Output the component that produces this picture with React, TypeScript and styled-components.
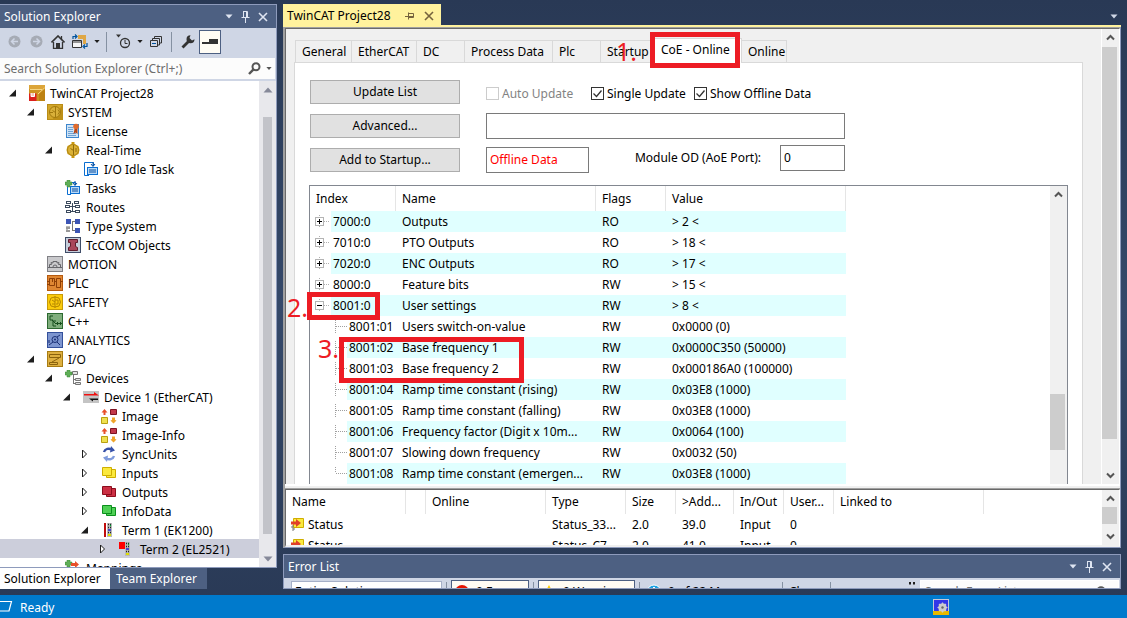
import React from "react";
import styled, { createGlobalStyle, css } from "styled-components";

const GlobalStyle = createGlobalStyle`
  * { box-sizing: border-box; }
  body { margin: 0; overflow: hidden; }
  body, button, input, select, table {
    font-family: "Noto Sans", "Open Sans", sans-serif;
    font-size: 12px;
    line-height: 16px;
    color: #000;
  }
  button { padding: 0; border: 0; background: none; cursor: default; }
  svg { display: block; flex: none; }
`;

/* ---------- shell ---------- */
const Shell = styled.div`
  display: flex;
  flex-direction: column;
  height: 100vh;
  background: linear-gradient(#293955 0%, #35496a 50%, #293955 100%);
`;
const Workspace = styled.main`
  flex: 1;
  min-height: 0;
  display: flex;
  gap: 6px;
  padding: 4px 6px 6px 0;
`;
const StatusBar = styled.footer`
  flex: none;
  height: 23px;
  display: flex;
  align-items: center;
  gap: 7px;
  padding-right: 178px;
  background: #007acc;
  color: #fff;
`;
const StatusText = styled.span`
  flex: 1;
  padding-top: 2px;
`;

/* ---------- tool windows ---------- */
const Sidebar = styled.aside`
  flex: 0 0 277px;
  min-height: 0;
  display: flex;
  flex-direction: column;
`;
const ToolWindow = styled.section`
  flex: 1;
  min-height: 0;
  display: flex;
  flex-direction: column;
  overflow: hidden;
  border: 1px solid #8e9bbc;
  border-left: 0;
  background: #fff;
`;
const TitleBar = styled.header`
  flex: none;
  height: 23px;
  display: flex;
  align-items: center;
  gap: 8px;
  padding: 0 8px 0 4px;
  background: #4d6082;
  color: #fff;
`;
const Title = styled.h2`
  flex: 1;
  margin: 0;
  font-size: 12px;
  font-weight: 400;
`;
const Toolbar = styled.div`
  flex: none;
  height: 29px;
  display: flex;
  align-items: center;
  padding: 0 0 2px 3px;
  background: #cfd6e5;
`;
const ToolButton = styled.button<{ $narrow?: boolean; $on?: boolean }>`
  width: ${(p) => (p.$narrow ? 11 : 22)}px;
  height: 24px;
  display: flex;
  align-items: center;
  justify-content: center;
  ${(p) => p.$on && css`
    border: 1px solid #4d6082;
    background: #fffcf4;
  `}
`;
const Divider = styled.span`
  width: 1px;
  height: 20px;
  margin: 0 5px 0 4px;
  background: #8591a2;
`;
const SearchRow = styled.label`
  flex: none;
  height: 24px;
  display: flex;
  align-items: center;
  gap: 5px;
  padding-right: 3px;
  border: solid #cfd6e5;
  border-width: 1px 1px 2px 0;
  background: #fcfcfc;
`;
const SearchInput = styled.input`
  flex: 1;
  min-width: 0;
  padding: 0 0 0 4px;
  border: 0;
  outline: 0;
  background: transparent;
  &::placeholder { color: #6d6d6d; opacity: 1; }
`;
const TreeArea = styled.div`
  flex: 1;
  min-height: 0;
  display: flex;
  overflow: hidden;
`;
const TreeList = styled.ul`
  flex: 1;
  margin: 0;
  padding: 2px 0 0;
  list-style: none;
`;
const TreeRow = styled.li<{ $level: number; $selected?: boolean }>`
  height: 19px;
  display: flex;
  align-items: center;
  padding-left: ${(p) => 8 + p.$level * 18}px;
  background: ${(p) => (p.$selected ? "#cccedb" : "transparent")};
  white-space: nowrap;
`;
const ArrowSlot = styled.span`
  width: 21px;
  flex: none;
`;
const TreeLabel = styled.span`
  padding: 2px 0 0 5px;
`;
const PaneTabs = styled.div`
  flex: none;
  height: 21px;
  display: flex;
`;
const PaneTab = styled.button<{ $active?: boolean }>`
  width: ${(p) => (p.$active ? 110 : 97)}px;
  padding: 0 0 0 ${(p) => (p.$active ? 4 : 6)}px;
  text-align: left;
  background: ${(p) => (p.$active ? "#fff" : "#4d6082")};
  color: ${(p) => (p.$active ? "#000" : "#fff")};
`;

/* ---------- scrollbars ---------- */
const Track = styled.div<{ $width: number; $bg: string }>`
  flex: none;
  width: ${(p) => p.$width}px;
  display: flex;
  flex-direction: column;
  align-items: center;
  background: ${(p) => p.$bg};
`;
const TrackButton = styled.button`
  height: 17px;
  flex: none;
  display: flex;
  align-items: center;
`;
const Thumb = styled.div<{ $size: number; $width: number; $fill: string; $flush?: boolean }>`
  flex: ${(p) => p.$size} 0 0;
  align-self: ${(p) => (p.$flush ? "flex-start" : "center")};
  width: ${(p) => p.$width}px;
  background: ${(p) => p.$fill};
`;
const Gap = styled.div<{ $size: number }>`
  flex: ${(p) => p.$size} 0 0;
`;

/* ---------- document area ---------- */
const DocumentArea = styled.div`
  flex: 1;
  min-width: 0;
  display: flex;
  flex-direction: column;
`;
const DocumentTabs = styled.div`
  flex: none;
  height: 23px;
  display: flex;
  align-items: flex-start;
  justify-content: space-between;
  border-bottom: 2px solid #fff29d;
`;
const DocumentTab = styled.div`
  height: 21px;
  display: flex;
  align-items: center;
  gap: 9px;
  padding: 2px 7px 0 4px;
  background: #fff29d;
`;
const DocumentName = styled.span`
  width: 109px;
`;
const TabListButton = styled.button`
  height: 24px;
  padding-right: 3px;
`;
const EditorFrame = styled.section`
  flex: 1;
  min-height: 0;
  display: flex;
  flex-direction: column;
  padding-top: 1px;
  border: solid #8e9bbc;
  border-width: 0 1px 1px 0;
  border-left: 2px solid #a0a0a0;
  background: #f0f0f0;
`;
const SunkenPane = styled.div<{ $grow?: boolean }>`
  ${(p) => (p.$grow ? "flex: 1; min-height: 0;" : "flex: none; height: 58px;")}
  display: flex;
  overflow: hidden;
  border-top: 1px solid #696969;
  border-left: 1px solid #696969;
  border-right: 1px solid #fff;
  box-shadow: 0 -1px #a0a0a0;
  ${(p) => !p.$grow && "background: #fff; border-bottom: 2px solid #f0f0f0;"}
`;
const Splitter = styled.div`
  flex: none;
  height: 5px;
  border-top: 2px solid #fff;
  background: #f0f0f0;
`;
const FormPane = styled.div`
  position: relative;
  flex: 1;
  min-width: 0;
  padding: 9px 18px 0 8px;
  border-right: 1px solid #fff;
  overflow: hidden;
`;
const TabStrip = styled.div`
  height: 24px;
  display: flex;
  align-items: flex-end;
  padding-left: 1px;
`;
const Tab = styled.button<{ $width: number; $active?: boolean }>`
  flex: none;
  width: ${(p) => p.$width}px;
  height: ${(p) => (p.$active ? 25 : 22)}px;
  padding: 0 0 ${(p) => (p.$active ? 3 : 0)}px 6px;
  margin-bottom: ${(p) => (p.$active ? -1 : 0)}px;
  border: solid #d9d9d9;
  border-width: 1px 1px 0 0;
  background: ${(p) => (p.$active ? "#fff" : "#f0f0f0")};
  text-align: left;
  white-space: nowrap;
  &:first-child { border-left-width: 1px; }
`;
const TabPage = styled.div`
  padding: 17px 14px 0 14px;
  border: 1px solid #d9d9d9;
  background: #fff;
`;
const FormGrid = styled.div`
  display: grid;
  grid-template-columns: 150px 359px;
  grid-auto-rows: 24px;
  gap: 10px 26px;
  align-items: center;
  padding-left: 1px;
`;
const PushButton = styled.button`
  height: 24px;
  border: 1px solid #adadad;
  background: #e1e1e1;
`;
const CheckGroup = styled.div`
  display: flex;
  align-items: center;
  gap: 5px;
  padding-top: 3px;
`;
const CheckLabel = styled.label<{ $width: number; $muted?: boolean }>`
  flex: none;
  width: ${(p) => p.$width}px;
  display: flex;
  align-items: center;
  gap: 3px;
  white-space: nowrap;
  color: ${(p) => (p.$muted ? "#838383" : "#000")};
`;
const CheckBox = styled.input`
  appearance: none;
  flex: none;
  width: 13px;
  height: 13px;
  margin: 0;
  border: 1px solid #333;
  background: #fff;
  &:disabled { border-color: #ccc; }
  &:checked {
    background: #fff url("data:image/svg+xml,%3Csvg xmlns='http://www.w3.org/2000/svg' width='11' height='11'%3E%3Cpath d='M1.5 5.5l3 3 5-6' fill='none' stroke='%23333' stroke-width='1.3'/%3E%3C/svg%3E") no-repeat;
  }
`;
const TextBox = styled.input<{ $width?: number; $red?: boolean }>`
  width: ${(p) => (p.$width ? p.$width + "px" : "100%")};
  height: 26px;
  padding: 0 3px 2px;
  border: 1px solid #7a7a7a;
  border-radius: 0;
  outline: 0;
  background: #fff;
  color: ${(p) => (p.$red ? "#f00" : "#000")};
`;
const SplitField = styled.div`
  display: flex;
  align-items: center;
  justify-content: space-between;
`;
const PortField = styled.label`
  display: flex;
  align-items: center;
  gap: 19px;
  padding-bottom: 4px;
`;
const ListBox = styled.div`
  height: 400px;
  margin-top: 13px;
  display: flex;
  justify-content: space-between;
  overflow: hidden;
  border: 1px solid #828790;
`;

/* ---------- tables ---------- */
const Table = styled.table<{ $width: number }>`
  width: ${(p) => p.$width}px;
  table-layout: fixed;
  border-collapse: collapse;
  align-self: flex-start;
`;
const HeadCell = styled.th<{ $width: number; $tall?: boolean }>`
  width: ${(p) => p.$width}px;
  height: ${(p) => (p.$tall ? 25 : 24)}px;
  padding: 0 0 0 6px;
  font-weight: 400;
  text-align: left;
  white-space: nowrap;
  box-shadow: inset -1px 0 #e5e5e5;
`;
const Row = styled.tr<{ $tint?: boolean }>`
  height: 21px;
  background: ${(p) => (p.$tint ? "#e0ffff" : "#fff")};
`;
const Cell = styled.td<{ $inset?: number }>`
  height: 21px;
  padding: 0 0 0 ${(p) => p.$inset ?? 6}px;
  overflow: hidden;
  white-space: nowrap;
`;
const IndexCell = styled.div`
  height: 21px;
  display: flex;
  align-items: center;
  gap: 2px;
`;
const Branch = styled.span`
  display: block;
  background: #fff;
`;
const IconText = styled.div`
  display: flex;
  align-items: center;
  gap: 4px;
`;

/* ---------- annotations ---------- */
const MarkBox = styled.div<{ $x: number; $y: number; $w: number; $h: number }>`
  position: absolute;
  left: ${(p) => p.$x}px;
  top: ${(p) => p.$y}px;
  width: ${(p) => p.$w}px;
  height: ${(p) => p.$h}px;
  border: 5px solid #ed1c24;
  pointer-events: none;
`;
const MarkNumber = styled.span<{ $x: number; $y: number }>`
  position: absolute;
  left: ${(p) => p.$x}px;
  top: ${(p) => p.$y}px;
  font-size: 25px;
  line-height: 26px;
  color: #ed1c24;
  pointer-events: none;
`;

/* ---------- error list ---------- */
const ErrorWindow = styled.section`
  flex: none;
  height: 35px;
  margin-top: 6px;
  overflow: hidden;
  border: 1px solid #8e9bbc;
  background: #cfd6e5;
`;
const ErrorToolbar = styled.div`
  display: flex;
  align-items: flex-start;
  gap: 4px;
  padding: 2px 1px 0 7px;
`;
const Scope = styled.select`
  appearance: none;
  width: 151px;
  height: 22px;
  margin-top: 1px;
  padding: 0 3px;
  border: 1px solid #a6b0c8;
  border-radius: 0;
  background: #fff;
`;
const ErrorFilter = styled.button<{ $width: number; $on?: boolean }>`
  width: ${(p) => p.$width}px;
  height: 24px;
  display: flex;
  align-items: center;
  gap: 6px;
  padding-left: 2px;
  white-space: nowrap;
  ${(p) => p.$on && css`
    border: 1px solid #4d6082;
    background: #fffcf4;
  `}
`;
const ErrorDivider = styled.span`
  width: 1px;
  height: 20px;
  margin-top: 2px;
  background: #8591a2;
`;
const Overflow = styled.span`
  flex: 1;
  display: flex;
  justify-content: flex-end;
  padding-top: 2px;
`;
const ErrorSearch = styled(SearchRow)`
  width: 199px;
  padding-right: 12px;
  border: 1px solid #fff;
`;

/* ---------- small glyphs ---------- */
const Caret = ({ fill = "#1e1e1e", w = 8 }: { fill?: string; w?: number }) => (
  <svg width={w} height="5" viewBox="0 0 8 5"><path d="M0.5 0.5h7L4 4.5z" fill={fill} /></svg>
);
const Pin = () => (
  <svg width="9" height="12" viewBox="0 0 9 12" fill="none" stroke="#dfe5f2"><path d="M2.500 0v6.500M2 0.500h4.500v6M5.500 0.500v6M0.500 6.500h8M4.500 7v5" /></svg>
);
const SidePin = () => (
  <svg width="10" height="8" viewBox="0 0 10 8" fill="none" stroke="#75633d"><path d="M0 4.500h3M3.500 0.500v7M3.500 1.500h5v4h-5M3.500 4.500h5" /></svg>
);
const Cross = ({ color = "#dfe5f2" }: { color?: string }) => (
  <svg width="10" height="10" viewBox="0 0 10 10" fill="none" stroke={color} strokeWidth="1.6"><path d="M1 1l8 8M9 1L1 9" /></svg>
);
const Magnifier = ({ color = "#555" }: { color?: string }) => (
  <svg width="13" height="13" viewBox="0 0 13 13" fill="none" stroke={color} strokeWidth="2"><circle cx="8" cy="4.700" r="3.500" /><path d="M5.500 7.300L1 12" strokeWidth="2.400" /></svg>
);
const Chevron = ({ up }: { up?: boolean }) => (
  <svg width="9" height="7" viewBox="0 0 9 7" fill="none" stroke="#555" strokeWidth="2"><path d={up ? "M1 5.500L4.500 2 8 5.500" : "M1 1.500L4.500 5 8 1.500"} /></svg>
);
const Wedge = ({ up }: { up?: boolean }) => (
  <svg width="10" height="6" viewBox="0 0 10 6"><path d={up ? "M0.500 5.500h9L5 0.500z" : "M0.500 0.500h9L5 5.500z"} fill="#868999" /></svg>
);
const TreeArrow = ({ open }: { open: boolean }) => (
  <svg width="9" height="10" viewBox="0 0 9 10">
    {open ? <path d="M8 1.500V8.500H1z" fill="#1e1e1e" /> : <path d="M2.500 1v8L6.500 5z" fill="#fff" stroke="#1e1e1e" />}
  </svg>
);

type Kind = "project" | "system" | "license" | "clock" | "task" | "tasks" | "routes" | "types" | "tccom" | "motion" | "plc" | "safety" | "cpp" | "analytics" | "io" | "devices" | "ethercat" | "image" | "sync" | "inputs" | "outputs" | "info" | "term1" | "term2" | "mappings";

const Stack = ({ fill, edge }: { fill: string; edge: string }) => (
  <g fill={fill} stroke={edge}><path d="M5.500 4.500h9v8h-9z" /><path d="M1.500 2.500h9v8h-9z" /></g>
);
const Plus = () => <path d="M2 0h3v2h2v3H5v2H2V5H0V2h2z" fill="#5fae57" stroke="#3f8a3b" strokeWidth="0.5" />;
const Leds = ({ x }: { x: number }) => (
  <g>
    <rect x={x} y="1" width="5" height="14" fill="#b9b9b9" />
    <path d={`M${x + 1} 2.500h1M${x + 3} 2.500h1M${x + 1} 5.500h1M${x + 3} 5.500h1M${x + 1} 10.500h1M${x + 3} 10.500h1`} stroke="#222" strokeWidth="1.500" />
    <path d={`M${x + 3} 3.500h1`} stroke="#0a3" strokeWidth="1.500" />
    <path d={`M${x + 1} 8h3`} stroke="#22c" strokeWidth="1.500" />
    <path d={`M${x + 1} 13h3`} stroke="#dd0" strokeWidth="2" />
  </g>
);

const drawings: Record<Kind, React.ReactNode> = {
  project: (<><rect width="16" height="16" fill="#cd9320" /><path d="M0 0h16v4H0z" fill="#dca53a" /><path d="M1 4.500h12M15.500 3L9 9" stroke="#f6d684" fill="none" /><path d="M10 9l6-5v12h-6z" fill="#bd8212" /><path d="M0 8.500h7.500V16H0z" fill="#dc1f1c" /><path d="M2 8v3.500h3.500V8" stroke="#fff" fill="#f4c9b8" /></>),
  system: (<><rect x="0.500" y="0.500" width="15" height="15" fill="#d2a62a" stroke="#b98c16" /><path d="M16 0v16H5z" fill="#bd8f17" /><circle cx="8" cy="8" r="5.500" fill="#d9b03a" stroke="#a37a0d" /><path d="M8.500 3v10M5.500 6.500l3 2M3 8.500h3M11 5.500l1.500 2.500-1.500 2.500" stroke="#a0780d" fill="none" /></>),
  license: (<><rect x="1.500" y="1.500" width="12" height="13" fill="#cfe3f6" stroke="#3d86cc" /><path d="M3 4.500h5M3 6.500h5M3 8.500h5M3 10.500h8M3 12.500h8" stroke="#6fa3d4" /><circle cx="11" cy="3.500" r="2.800" fill="#e06a2b" /><path d="M9.500 6l-1 5 2-1.500 2 1.500V6z" fill="#b8481a" /></>),
  clock: (<><path d="M6.500 0h3v2l4 2 1 4-1 4-4 2v2h-3v-2l-4-2-1-4 1-4 4-2z" fill="#c8970f" /><circle cx="8" cy="8" r="5.500" fill="#dbb136" stroke="#b38711" /><path d="M8.500 3v10M5.500 6.500l3 2M11 6v4" stroke="#8f6b0a" fill="none" /></>),
  task: (<><path d="M6 14.500H1.500v-13h9V5" fill="#fff" stroke="#0a6ed1" /><path d="M10 1v4M8 3l2 2.500L12 3" stroke="#0a4f9e" fill="none" /><rect x="4.500" y="6.500" width="10" height="7" fill="#b8d9f8" stroke="#0a6ed1" /><path d="M6 9h7M6 11h7" stroke="#0a4f9e" /></>),
  tasks: (<><path d="M6 14.500H2.500v-12h8V5" fill="#fff" stroke="#0a6ed1" /><path d="M10 1v4M8 3l2 2.500L12 3" stroke="#0a4f9e" fill="none" /><rect x="5.500" y="6.500" width="9" height="7" fill="#b8d9f8" stroke="#0a6ed1" /><path d="M7 9h6M7 11h6" stroke="#0a4f9e" /><Plus /></>),
  routes: (<g fill="#fff" stroke="#3b4a5e"><path d="M7.500 4v9M2 7.500h11M3 12.500h9" fill="none" /><rect x="1.500" y="2.500" width="4" height="2" /><rect x="9.500" y="2.500" width="4" height="2" /><rect x="0.500" y="6.500" width="4" height="2" /><rect x="10.500" y="6.500" width="4" height="2" /><rect x="1.500" y="11.500" width="4" height="2" /><rect x="10.500" y="11.500" width="4" height="2" /></g>),
  types: (<><path d="M1 1h5v5H1zM10 1h5v5h-5zM10 10h5v5h-5z" fill="#3c55b5" /><path d="M7.500 3v10M7 3.500h3M7 12.500h3M2 8v6M4 8v3M1 10h4" stroke="#777" fill="none" /><path d="M1 12h4v2H1z" fill="#999" /></>),
  tccom: (<><rect x="0.500" y="0.500" width="15" height="15" fill="#c5ccd9" stroke="#3f4d68" /><path d="M3.500 2.500h9v3h-2v4l2 1v3h-9v-3l2-1v-4h-2z" fill="#a8455a" stroke="#5f1c2c" /></>),
  motion: (<><rect x="0.500" y="0.500" width="15" height="15" fill="#c9c9cc" stroke="#808085" /><path d="M1 11.500h14M2.500 11V8.500h2L4 6.500l2 .5V5.500h4V7l2-.5-.5 2h2V11M6 11a2 2 0 014 0" stroke="#66666b" fill="none" /></>),
  plc: (<><rect x="0.500" y="0.500" width="15" height="15" fill="#e08733" stroke="#b55a10" /><path d="M2.500 3.500h5v7h-5zM9.500 3.500h4v9h-4zM0 6.500h2M0 9.500h2M7 6.500h2M14 6.500h2M5.500 3v4" stroke="#8f3f06" fill="none" /></>),
  safety: (<><rect x="0.500" y="0.500" width="15" height="15" fill="#fbcb0c" stroke="#c79a06" /><path d="M8 2v12M8 3L4 4 2.500 8 4 12l4 1M8 3l4 1 1.500 4L12 12l-4 1M5 6l3 2M5 10h3M8 6h3v4H9" stroke="#b58700" fill="none" /></>),
  cpp: (<><rect x="0.500" y="0.500" width="15" height="15" fill="#7fae7c" stroke="#2c6930" /><path d="M6 3H3v4h3M9 8H6v5h3M5 7l4 4M9 10.500h3M10.500 9v3M12 10.500h3M13.500 9v3" stroke="#174e1c" fill="none" /></>),
  analytics: (<><rect x="0.500" y="0.500" width="15" height="15" fill="#7d95cf" stroke="#34509b" /><circle cx="8" cy="7.500" r="3" fill="none" stroke="#1a2f74" /><circle cx="8" cy="7.500" r="1" fill="#1a2f74" /><path d="M2 13l4-3M10 10l3 3M10 5l3-2M2 11V8" stroke="#1a2f74" fill="none" /></>),
  io: (<><rect x="0.500" y="0.500" width="15" height="15" fill="#deb040" stroke="#a87c12" /><path d="M2.500 3.500h11v3h-11zM12 7l-7 4M2.500 11.500h8v2h-8z" stroke="#8a620c" fill="none" /></>),
  devices: (<><path d="M8.500 5v9M8 9.500h3M8 13.500h3" stroke="#777" fill="none" /><path d="M7.500 1.500h5v3h-5zM10.500 8.500h5v2h-5zM10.500 12.500h5v2h-5z" fill="#e4e4e4" stroke="#777" /><Plus /></>),
  ethercat: (<><rect y="2" width="16" height="12" fill="#c4c4c4" /><path d="M1 5h10V3l5 3.500H1z" fill="#f01010" /><path d="M15 9.500H6l4 3V11h5z" fill="#111" /></>),
  image: (<><path d="M3.500 1l3 3.500h-2V7h-2V4.500h-2z" fill="#e8502a" /><path d="M9.500 1.500h6v5h-6z" fill="#c2384a" stroke="#7d1322" /><path d="M0.500 9.500h6v6h-6z" fill="#efe04f" stroke="#b9a011" /><path d="M12.500 15.500l-3-3 1.500-.5V9.500h3V12l1.500.5z" fill="#efa52a" /></>),
  sync: (<g fill="none" strokeWidth="2.400"><path d="M3 6c1-3.500 5-4 8-2.500" stroke="#3650a8" /><path d="M10 0l4 4.500-5 2z" fill="#3650a8" stroke="none" /><path d="M13 10c-1 3.500-5 4-8 2.500" stroke="#7f9bdc" /><path d="M6 16l-4-4.500 5-2z" fill="#7f9bdc" stroke="none" /></g>),
  inputs: <Stack fill="#fbe93d" edge="#cfae00" />,
  outputs: <Stack fill="#cc2f44" edge="#8c0d1c" />,
  info: <Stack fill="#4fd055" edge="#0b8f1d" />,
  term1: (<><rect x="3" y="1" width="2" height="14" fill="#c00d0d" /><Leds x={6} /></>),
  term2: (<><rect x="0" y="1" width="6" height="7" fill="#f00" /><Leds x={6} /></>),
  mappings: (<><Plus /><path d="M6 3h4V1l4 3.500L10 8V6H6z" fill="#e8502a" /></>),
};
const KindIcon = ({ kind }: { kind: Kind }) => (
  <svg width="16" height="16" viewBox="0 0 16 16" aria-hidden="true">{drawings[kind]}</svg>
);

/* ---------- data ---------- */
type Node = [level: number, kind: Kind, label: string, open?: boolean];
const nodes: Node[] = [
  [0, "project", "TwinCAT Project28", true],
  [1, "system", "SYSTEM", true],
  [2, "license", "License"],
  [2, "clock", "Real-Time", true],
  [3, "task", "I/O Idle Task"],
  [2, "tasks", "Tasks"],
  [2, "routes", "Routes"],
  [2, "types", "Type System"],
  [2, "tccom", "TcCOM Objects"],
  [1, "motion", "MOTION"],
  [1, "plc", "PLC"],
  [1, "safety", "SAFETY"],
  [1, "cpp", "C++"],
  [1, "analytics", "ANALYTICS"],
  [1, "io", "I/O", true],
  [2, "devices", "Devices", true],
  [3, "ethercat", "Device 1 (EtherCAT)", true],
  [4, "image", "Image"],
  [4, "image", "Image-Info"],
  [4, "sync", "SyncUnits", false],
  [4, "inputs", "Inputs", false],
  [4, "outputs", "Outputs", false],
  [4, "info", "InfoData", false],
  [4, "term1", "Term 1 (EK1200)", true],
  [5, "term2", "Term 2 (EL2521)", false],
  [2, "mappings", "Mappings"],
];

const objects: [index: string, name: string, flags: string, value: string][] = [
  ["7000:0", "Outputs", "RO", "> 2 <"],
  ["7010:0", "PTO Outputs", "RO", "> 18 <"],
  ["7020:0", "ENC Outputs", "RO", "> 17 <"],
  ["8000:0", "Feature bits", "RW", "> 15 <"],
  ["8001:0", "User settings", "RW", "> 8 <"],
  ["8001:01", "Users switch-on-value", "RW", "0x0000 (0)"],
  ["8001:02", "Base frequency 1", "RW", "0x0000C350 (50000)"],
  ["8001:03", "Base frequency 2", "RW", "0x000186A0 (100000)"],
  ["8001:04", "Ramp time constant (rising)", "RW", "0x03E8 (1000)"],
  ["8001:05", "Ramp time constant (falling)", "RW", "0x03E8 (1000)"],
  ["8001:06", "Frequency factor (Digit x 10m...", "RW", "0x0064 (100)"],
  ["8001:07", "Slowing down frequency", "RW", "0x0032 (50)"],
  ["8001:08", "Ramp time constant (emergen...", "RW", "0x03E8 (1000)"],
];

const tabs: [label: string, width: number][] = [
  ["General", 57], ["EtherCAT", 65], ["DC", 48], ["Process Data", 88], ["Plc", 48], ["Startup", 54], ["CoE - Online", 87], ["Online", 45],
];

const linkColumns: [label: string, width: number][] = [
  ["Name", 120], ["", 20], ["Online", 120], ["Type", 80], ["Size", 50], [">Add...", 58], ["In/Out", 50], ["User...", 50], ["Linked to", 150],
];
const links = [
  ["Status", "", "", "Status_33...", "2.0", "39.0", "Input", "0", ""],
  ["Status", "", "", "Status_C7...", "2.0", "41.0", "Input", "0", ""],
];

/* ---------- parts ---------- */
type BarProps = { before: number; size: number; after: number };
const ClassicScroll = ({ before, size, after }: BarProps) => (
  <Track $width={17} $bg="#f0f0f0">
    <TrackButton aria-label="Scroll up"><Chevron up /></TrackButton>
    <Gap $size={before} />
    <Thumb $size={size} $width={15} $fill="#cdcdcd" $flush />
    <Gap $size={after} />
    <TrackButton aria-label="Scroll down"><Chevron /></TrackButton>
  </Track>
);

const IndexBranch = ({ index }: { index: string }) => {
  const parent = index.endsWith(":0");
  const open = index === "8001:0";
  const last = index === "8001:08";
  return (
    <Branch>
      {parent ? (
        <svg width="21" height="21" viewBox="0 0 21 21" fill="none">
          <path d="M9.500 4v2M9.500 15v2M14 10.500h6" stroke="#b0b0b0" strokeDasharray="1 1" />
          <rect x="5.500" y="6.500" width="8" height="8" fill="#fff" stroke="#b4b4b4" />
          <path d={open ? "M7 10.500h5" : "M7 10.500h5M9.500 8v5"} stroke="#000" />
        </svg>
      ) : (
        <svg width="37" height="21" viewBox="0 0 37 21" fill="none">
          <path d={last ? "M25.500 4v6M26 10.500h11" : "M25.500 4v13M26 10.500h11"} stroke="#a0a0a0" strokeDasharray="1 1" />
        </svg>
      )}
    </Branch>
  );
};

const SolutionExplorer = () => (
  <Sidebar>
    <ToolWindow>
      <TitleBar>
        <Title>Solution Explorer</Title>
        <button aria-label="Window position"><Caret fill="#dfe5f2" /></button>
        <button aria-label="Auto hide"><Pin /></button>
        <button aria-label="Close"><Cross /></button>
      </TitleBar>
      <Toolbar>
        <ToolButton aria-label="Back"><svg width="13" height="13" viewBox="0 0 13 13"><circle cx="6.500" cy="6.500" r="6" fill="#a6abb5" /><path d="M10 6.500H4M6.500 3.500l-3 3 3 3" stroke="#cfd6e5" strokeWidth="1.500" fill="none" /></svg></ToolButton>
        <ToolButton aria-label="Forward"><svg width="13" height="13" viewBox="0 0 13 13"><circle cx="6.500" cy="6.500" r="6" fill="#a6abb5" /><path d="M3 6.500h6M6.500 3.500l3 3-3 3" stroke="#cfd6e5" strokeWidth="1.500" fill="none" /></svg></ToolButton>
        <ToolButton aria-label="Home"><svg width="14" height="14" viewBox="0 0 14 14" fill="none" stroke="#333"><path d="M0.500 7.500L7 1l6.500 6.500" strokeWidth="1.600" /><path d="M2.500 7v6.500h9V7M10.500 1v3" strokeWidth="1.300" /><path d="M5 8h4v5.500H5z" fill="#333" stroke="none" /></svg></ToolButton>
        <ToolButton aria-label="Sync with active document"><svg width="16" height="15" viewBox="0 0 16 15" fill="none"><path d="M6 1h8v9h-3V5H6z" fill="#dfa745" /><path d="M0.500 6.500h9v7h-9z" fill="#f5f5f5" stroke="#333" /><path d="M0.500 8h9" stroke="#333" /><path d="M1 5V2.500h3M3 0.500l2 2-2 2M15 9v3.500h-3M13 10.500l-2 2 2 2" stroke="#00539c" strokeWidth="1.200" /></svg></ToolButton>
        <ToolButton $narrow aria-label="More scopes"><Caret w={6} /></ToolButton>
        <Divider />
        <ToolButton aria-label="Pending changes filter"><svg width="15" height="15" viewBox="0 0 15 15" fill="none" stroke="#333"><circle cx="9" cy="9" r="4.500" strokeWidth="1.300" /><path d="M9 6v3.500h2.500" /><path d="M0 0.500h5L2.500 3.500z" fill="#333" stroke="none" /></svg></ToolButton>
        <ToolButton $narrow aria-label="More filters"><Caret w={6} /></ToolButton>
        <ToolButton aria-label="Collapse all"><svg width="12" height="12" viewBox="0 0 12 12" fill="none" stroke="#333"><path d="M0.500 4.500h7v6h-7zM2.500 4V2.500h7V9H8M4.500 2V0.500h7V7H10" /><path d="M2 7.500h4" stroke="#00539c" /></svg></ToolButton>
        <Divider />
        <ToolButton aria-label="Properties"><svg width="15" height="15" viewBox="0 0 15 15" fill="none" stroke="#333"><path d="M1.500 13.500L8 7" strokeWidth="2.800" /><path d="M9.500 1.300a4 4 0 104 4L11 6.500 8.500 4z" fill="#333" stroke="none" /></svg></ToolButton>
        <ToolButton $on aria-label="Preview selected items"><svg width="16" height="6" viewBox="0 0 16 6" fill="#333"><path d="M0 3h7v2H0zM7 0h9v5H7z" /></svg></ToolButton>
      </Toolbar>
      <SearchRow>
        <SearchInput aria-label="Search Solution Explorer" placeholder="Search Solution Explorer (Ctrl+;)" />
        <Magnifier /><Caret fill="#555" w={6} />
      </SearchRow>
      <TreeArea>
        <TreeList>
          {nodes.map(([level, kind, label, open]) => (
            <TreeRow key={label} $level={level} $selected={kind === "term2"}>
              <ArrowSlot>{open !== undefined && <TreeArrow open={open} />}</ArrowSlot>
              <KindIcon kind={kind} />
              <TreeLabel>{label}</TreeLabel>
            </TreeRow>
          ))}
        </TreeList>
        <Track $width={17} $bg="#e8e8ec">
          <TrackButton aria-label="Scroll up"><Wedge up /></TrackButton>
          <Gap $size={19} />
          <Thumb $size={417} $width={9} $fill="#c2c3c9" />
          <Gap $size={16} />
          <TrackButton aria-label="Scroll down"><Wedge /></TrackButton>
        </Track>
      </TreeArea>
    </ToolWindow>
    <PaneTabs>
      <PaneTab $active>Solution Explorer</PaneTab>
      <PaneTab>Team Explorer</PaneTab>
    </PaneTabs>
  </Sidebar>
);

const CoeOnline = () => (
  <FormPane>
    <TabStrip role="tablist">
      {tabs.map(([label, width]) => (
        <Tab key={label} role="tab" aria-selected={label === "CoE - Online"} $width={width} $active={label === "CoE - Online"}>{label}</Tab>
      ))}
    </TabStrip>
    <TabPage>
      <FormGrid>
        <PushButton>Update List</PushButton>
        <CheckGroup>
          <CheckLabel $width={100} $muted><CheckBox type="checkbox" disabled />Auto Update</CheckLabel>
          <CheckLabel $width={98}><CheckBox type="checkbox" defaultChecked />Single Update</CheckLabel>
          <CheckLabel $width={120}><CheckBox type="checkbox" defaultChecked />Show Offline Data</CheckLabel>
        </CheckGroup>
        <PushButton>Advanced...</PushButton>
        <TextBox aria-label="Advanced settings" />
        <PushButton>Add to Startup...</PushButton>
        <SplitField>
          <TextBox aria-label="Data source" $width={103} $red defaultValue="Offline Data" />
          <PortField>Module OD (AoE Port):<TextBox $width={65} defaultValue="0" /></PortField>
        </SplitField>
      </FormGrid>
      <ListBox>
        <Table $width={536}>
          <thead>
            <tr>
              <HeadCell $tall $width={86}>Index</HeadCell>
              <HeadCell $tall $width={200}>Name</HeadCell>
              <HeadCell $tall $width={70}>Flags</HeadCell>
              <HeadCell $tall $width={180}>Value</HeadCell>
            </tr>
          </thead>
          <tbody>
            {objects.map(([index, name, flags, value], i) => (
              <Row key={index} $tint={i % 2 === 0}>
                <Cell $inset={0}><IndexCell><IndexBranch index={index} />{index}</IndexCell></Cell>
                <Cell>{name}</Cell>
                <Cell>{flags}</Cell>
                <Cell>{value}</Cell>
              </Row>
            ))}
          </tbody>
        </Table>
        <ClassicScroll before={191} size={56} after={117} />
      </ListBox>
    </TabPage>
    <MarkBox $x={364} $y={3} $w={90} $h={36} />
    <MarkBox $x={21} $y={263} $w={73} $h={28} />
    <MarkBox $x={53} $y={308} $w={185} $h={46} />
    <MarkNumber $x={330} $y={9}>1.</MarkNumber>
    <MarkNumber $x={1} $y={265}>2.</MarkNumber>
    <MarkNumber $x={32} $y={306}>3.</MarkNumber>
  </FormPane>
);

const InputIcon = () => (
  <svg width="13" height="13" viewBox="0 0 13 13"><path d="M2.500 0.500h10v9h-10z" fill="#fbe93d" stroke="#cfae00" /><path d="M0 3.500h5V1l5 4-5 4V6.500H0z" fill="#e0402a" /><path d="M3 8H1v2h2v2H1" stroke="#777" fill="none" /></svg>
);

const ErrorList = () => (
  <ErrorWindow>
    <TitleBar>
      <Title>Error List</Title>
      <button aria-label="Window position"><Caret fill="#dfe5f2" /></button>
      <button aria-label="Auto hide"><Pin /></button>
      <button aria-label="Close"><Cross /></button>
    </TitleBar>
    <ErrorToolbar>
      <Scope aria-label="Scope"><option>Entire Solution</option></Scope>
      <ErrorDivider />
      <ErrorFilter $width={78} $on><svg width="16" height="16" viewBox="0 0 16 16"><circle cx="8" cy="8" r="7" fill="#e51400" /><path d="M5 5l6 6M11 5l-6 6" stroke="#fff" strokeWidth="2" /></svg>0 Errors</ErrorFilter>
      <ErrorDivider />
      <ErrorFilter $width={97} $on><svg width="16" height="16" viewBox="0 0 16 16"><path d="M8 1l7 13H1z" fill="#fc0" /><path d="M8 6v6" stroke="#000" strokeWidth="1.500" /></svg>0 Warnings</ErrorFilter>
      <ErrorDivider />
      <ErrorFilter $width={134}><svg width="16" height="16" viewBox="0 0 16 16"><circle cx="8" cy="8" r="7" fill="#1ba1e2" stroke="#fff" /><path d="M8 3v2M8 7v5" stroke="#fff" strokeWidth="2" /></svg>0 of 22 Messages</ErrorFilter>
      <ErrorDivider />
      <ErrorFilter $width={39}>Clear</ErrorFilter>
      <ErrorDivider />
      <Overflow><svg width="8" height="5" viewBox="0 0 8 5"><path d="M1 0h2v2.500H1zM5 0h2v2.500H5z" fill="#1e1e1e" /></svg></Overflow>
      <ErrorSearch><SearchInput aria-label="Search Error List" placeholder="Search Error List" /><Magnifier /></ErrorSearch>
    </ErrorToolbar>
  </ErrorWindow>
);

export default function App() {
  return (
    <>
      <GlobalStyle />
      <Shell>
        <Workspace>
          <SolutionExplorer />
          <DocumentArea>
            <DocumentTabs>
              <DocumentTab>
                <DocumentName>TwinCAT Project28</DocumentName>
                <button aria-label="Pin tab"><SidePin /></button>
                <button aria-label="Close tab"><Cross color="#75633d" /></button>
              </DocumentTab>
              <TabListButton aria-label="Open documents"><Caret fill="#cfd6e5" /></TabListButton>
            </DocumentTabs>
            <EditorFrame>
              <SunkenPane $grow>
                <CoeOnline />
                <ClassicScroll before={1} size={392} after={28} />
              </SunkenPane>
              <Splitter />
              <SunkenPane>
                <Table $width={698}>
                  <thead>
                    <tr>{linkColumns.map(([label, width], i) => <HeadCell key={i} $width={width}>{label}</HeadCell>)}</tr>
                  </thead>
                  <tbody>
                    {links.map((cells, r) => (
                      <Row key={r}>
                        {cells.map((cell, i) => (
                          <Cell key={i} $inset={i === 0 ? 5 : 6}>{i === 0 ? <IconText><InputIcon />{cell}</IconText> : cell}</Cell>
                        ))}
                      </Row>
                    ))}
                  </tbody>
                </Table>
                <Gap $size={1} />
                <ClassicScroll before={0} size={17} after={4} />
              </SunkenPane>
            </EditorFrame>
            <ErrorList />
          </DocumentArea>
        </Workspace>
        <StatusBar>
          <svg width="13" height="11" viewBox="0 0 13 11"><path d="M0 0.500h11.500L9 10H0" fill="none" stroke="#fff" strokeWidth="1.200" /></svg>
          <StatusText>Ready</StatusText>
          <svg width="16" height="16" viewBox="0 0 16 16"><rect width="16" height="16" fill="#c8c8d8" /><path d="M1 1h14v11H1z" fill="#3436e8" /><path d="M0 12h16v4H0z" fill="#e8b900" /><circle cx="9.500" cy="8.500" r="3" fill="none" stroke="#ccc" strokeWidth="2.600" /><path d="M9.500 3.500v10M4.500 8.500h10M6 5l7 7M13 5l-7 7" stroke="#ccc" strokeWidth="1.200" /><circle cx="9.500" cy="8.500" r="1.200" fill="#666" /></svg>
        </StatusBar>
      </Shell>
    </>
  );
}
